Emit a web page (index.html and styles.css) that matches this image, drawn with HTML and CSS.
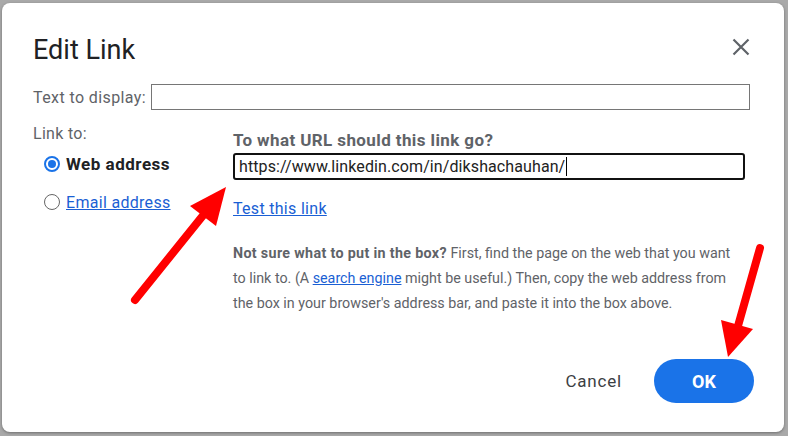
FILE: index.html
```html
<!DOCTYPE html>
<html lang="en">
<head>
  <meta charset="UTF-8">
  <title>Edit Link</title>
  <link rel="stylesheet" href="styles.css">
</head>
<body>
  <div class="dialog">
    <div class="head">
      <h1>Edit Link</h1>
      <button class="close" aria-label="Close">
        <svg width="18" height="18" viewBox="0 0 18 18"><path d="M1.5 1.5 L16.5 16.5 M16.5 1.5 L1.5 16.5" stroke="#5f6368" stroke-width="2.2" fill="none"/></svg>
      </button>
    </div>

    <div class="display-row">
      <label>Text to display:</label>
      <div class="display-input"></div>
    </div>

    <div class="body">
      <div class="link-to">
        <div class="caption">Link to:</div>
        <div class="radio"><span class="dot on"></span><b>Web address</b></div>
        <div class="radio second"><span class="dot"></span><a href="#">Email address</a></div>
      </div>

      <div class="url-col">
        <div class="question">To what URL should this link go?</div>
        <div class="url-box">https://www.linkedin.com/in/dikshachauhan/<span class="caret"></span></div>
        <a class="test" href="#">Test this link</a>
        <p class="help"><b>Not sure what to put in the box?</b> First, find the page on the web that you want to link to. (A <a href="#">search engine</a> might be useful.) Then, copy the web address from the box in your browser's address bar, and paste it into the box above.</p>
      </div>
    </div>

    <div class="actions">
      <button class="cancel">Cancel</button>
      <button class="ok">OK</button>
    </div>
  </div>

  <!-- red annotation arrows drawn over the dialog -->
  <svg class="arrows" width="788" height="436" viewBox="0 0 788 436">
    <line x1="135" y1="300" x2="205" y2="213" stroke="#f00" stroke-width="8" stroke-linecap="round"/>
    <polygon points="226,187 190,206 216,226" fill="#f00"/>
    <line x1="760" y1="248" x2="738" y2="326" stroke="#f00" stroke-width="8" stroke-linecap="round"/>
    <polygon points="728,357 721,320 753,329" fill="#f00"/>
  </svg>
</body>
</html>
```

FILE: styles.css
```css
* { margin: 0; padding: 0; box-sizing: border-box; }
body { background: #a9a9a9; font-family: Roboto, "Liberation Sans", sans-serif; color: #202124; width: 788px; height: 436px; overflow: hidden; position: relative; }
.dialog { margin: 3px 0 0 2px; width: 782px; height: 429px; background: #fff; border-radius: 8px; box-shadow: 0 1px 3px rgba(0,0,0,0.35); padding: 31px 30px 29px 31px; display: flex; flex-direction: column; }
.head { display: flex; justify-content: space-between; align-items: center; }
.head h1 { font-size: 27px; font-weight: 400; line-height: 32px; color: #202124; }
.close { background: none; border: none; width: 18px; height: 18px; margin: -6px 4px 0 0; cursor: pointer; display: flex; }
.display-row { display: flex; align-items: center; gap: 5px; margin-top: 18px; }
.display-row label { font-size: 16px; letter-spacing: 0.4px; color: #5f6368; }
.display-input { flex: 1; height: 26px; border: 1px solid #767676; margin-right: 4px; }
.body { display: flex; margin-top: 14px; }
.link-to { width: 200px; font-size: 16px; }
.caption { line-height: 20px; color: #5f6368; letter-spacing: 0.3px; }
.radio { display: flex; align-items: center; height: 20px; margin-top: 10px; padding-left: 11px; }
.radio.second { margin-top: 18px; }
.radio b { color: #202124; margin-left: 6px; font-size: 17px; letter-spacing: 0.5px; }
.radio a { color: #1a5fd4; margin-left: 6px; letter-spacing: 0.3px; }
.dot { width: 16px; height: 16px; border: 1.5px solid #666; border-radius: 50%; display: flex; align-items: center; justify-content: center; }
.dot.on { border: 2px solid #1a73e8; }
.dot.on::after { content: ""; width: 8px; height: 8px; border-radius: 50%; background: #1a73e8; }
.url-col { flex: 1; padding-top: 6px; }
.question { font-size: 17px; font-weight: bold; line-height: 20px; letter-spacing: 0.4px; color: #5f6368; }
.url-box { margin: 3px 9px 0 0; height: 27px; border: 2px solid #111; border-radius: 3px; font-size: 16px; letter-spacing: 0.1px; line-height: 23px; padding-left: 4px; color: #222; display: flex; align-items: center; }
.caret { width: 1px; height: 19px; background: #000; margin-left: 1px; }
.test { display: block; width: max-content; margin-top: 19px; font-size: 16px; line-height: 20px; letter-spacing: 0.3px; color: #1a5fd4; }
.help { margin-top: 22px; width: 505px; font-size: 14.3px; line-height: 24.8px; color: #5f6368; }
.help b { color: #5f6368; letter-spacing: 0.33px; }
.help a { color: #1a5fd4; }
.actions { margin-top: auto; display: flex; justify-content: flex-end; align-items: center; }
.cancel { background: none; border: none; font-family: inherit; font-size: 17px; letter-spacing: 0.8px; color: #3c4043; margin-right: 32px; cursor: pointer; }
.ok { width: 100px; height: 44px; border: none; border-radius: 22px; background: #1a73e8; color: #fff; font-family: inherit; font-size: 18px; font-weight: bold; cursor: pointer; }
.arrows { position: absolute; top: 0; left: 0; pointer-events: none; }
```
